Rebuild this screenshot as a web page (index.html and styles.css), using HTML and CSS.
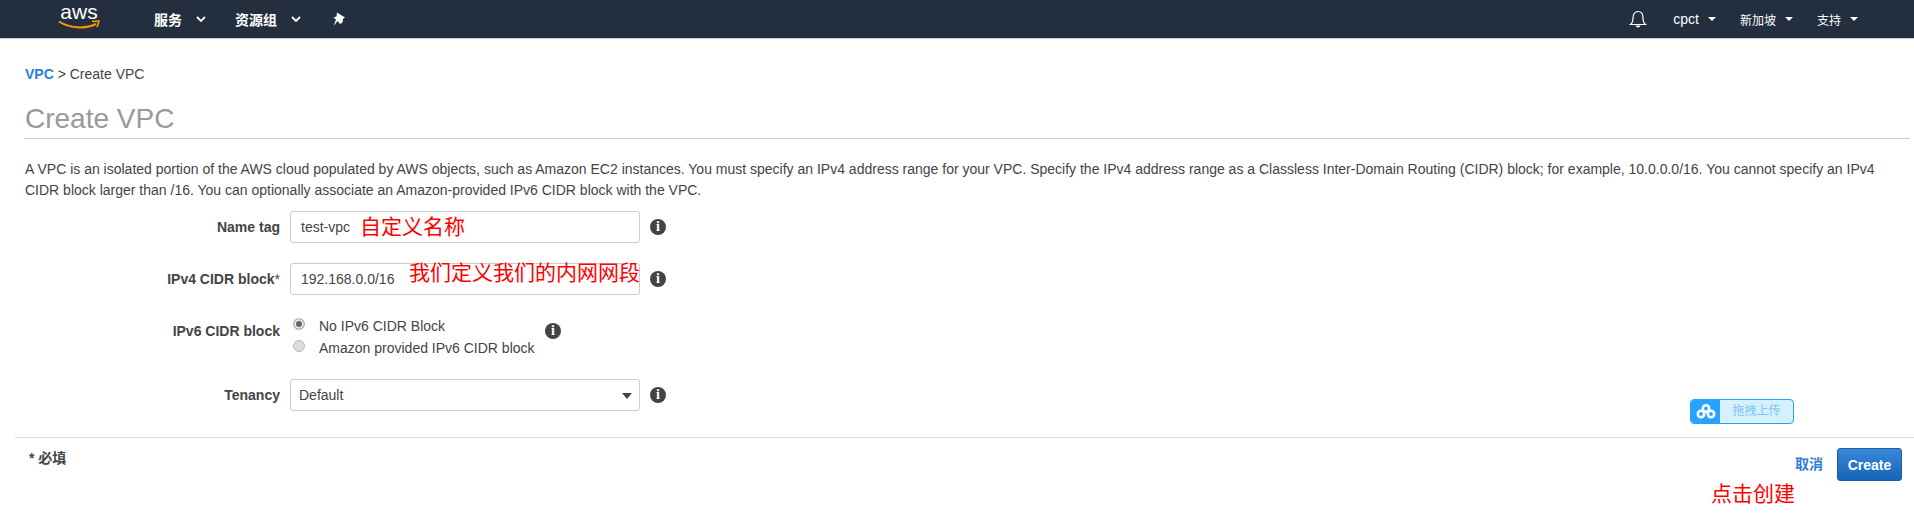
FILE: index.html
```html
<!DOCTYPE html>
<html lang="zh">
<head>
    <meta charset="UTF-8">
    <title>Create VPC</title>
    <link rel="stylesheet" href="styles.css">
</head>
<body>
    <nav class="topbar">
        <div class="logo">
            <span class="logo-text">aws</span>
            <svg class="logo-smile" width="42" height="10" viewBox="0 0 42 10"><path d="M1 1.500C11 8 27 9.500 38 4" fill="none" stroke="#f90" stroke-width="2"/><path d="M34 1.500L41 1L39 7" fill="none" stroke="#f90" stroke-width="1.600"/></svg>
        </div>
        <a class="menu menu-services">服务<svg class="chev" width="10" height="6" viewBox="0 0 10 6"><path d="M1 1l4 4 4-4" fill="none" stroke="#fff" stroke-width="1.800"/></svg></a>
        <a class="menu menu-groups">资源组<svg class="chev" width="10" height="6" viewBox="0 0 10 6"><path d="M1 1l4 4 4-4" fill="none" stroke="#fff" stroke-width="1.800"/></svg></a>
        <svg class="pin" width="14" height="15" viewBox="0 0 14 15"><path d="M5 0.500L13 5.500L11 6.800L10.500 10.500L8 12L5.500 9L1.500 14L4 7.500L1.500 5.500L4.500 4.500Z" fill="#fff"/></svg>
        <div class="topbar-right">
            <svg class="bell" width="18" height="19" viewBox="0 0 18 19"><path d="M1.500 14.500C3.500 13 4 11.500 4 8C4 4 6 1.500 9 1.500S14 4 14 8C14 11.500 14.500 13 16.500 14.500Z" fill="none" stroke="#fff" stroke-width="1.200"/><path d="M6.500 15.500C7 18 11 18 11.500 15.500Z" fill="#fff"/></svg>
            <a class="small-menu small-user">cpct<i class="caret"></i></a>
            <a class="small-menu small-region">新加坡<i class="caret"></i></a>
            <a class="small-menu small-support">支持<i class="caret"></i></a>
        </div>
    </nav>

    <main class="content">
        <div class="crumbs"><a class="crumb-link">VPC</a> &gt; Create VPC</div>
        <h1 class="title">Create VPC</h1>
        <p class="intro">A VPC is an isolated portion of the AWS cloud populated by AWS objects, such as Amazon EC2 instances. You must specify an IPv4 address range for your VPC. Specify the IPv4 address range as a Classless Inter-Domain Routing (CIDR) block; for example, 10.0.0.0/16. You cannot specify an IPv4 CIDR block larger than /16. You can optionally associate an Amazon-provided IPv6 CIDR block with the VPC.</p>

        <div class="row row-name">
            <label class="label">Name tag</label>
            <div class="field">test-vpc<span class="note note-name">自定义名称</span></div>
            <span class="info">i</span>
        </div>
        <div class="row row-cidr">
            <label class="label">IPv4 CIDR block<span class="star">*</span></label>
            <div class="field">192.168.0.0/16<span class="note note-cidr">我们定义我们的内网网段</span></div>
            <span class="info">i</span>
        </div>
        <div class="row row-ipv6">
            <label class="label">IPv6 CIDR block</label>
            <div class="radios">
                <div class="radio-line"><span class="radio radio-on"></span>No IPv6 CIDR Block</div>
                <div class="radio-line"><span class="radio"></span>Amazon provided IPv6 CIDR block</div>
            </div>
            <span class="info">i</span>
        </div>
        <div class="row row-tenancy">
            <label class="label">Tenancy</label>
            <div class="field field-select">Default<i class="select-arrow"></i></div>
            <span class="info">i</span>
        </div>
    </main>

    <div class="upload">
        <span class="upload-icon"><svg width="20" height="15" viewBox="0 0 20 15"><g fill="none" stroke="#fff" stroke-width="2.600"><circle cx="10" cy="4.500" r="3.200"/><circle cx="5" cy="10" r="3.200"/><circle cx="15" cy="10" r="3.200"/></g></svg></span>
        <span class="upload-text">拖拽上传</span>
    </div>

    <footer class="actions">
        <span class="required">* 必填</span>
        <a class="cancel">取消</a>
        <button class="create">Create</button>
        <span class="note note-create">点击创建</span>
    </footer>
</body>
</html>
```
FILE: styles.css
```css
body {
    margin: 0;
    height: 520px;
    overflow: hidden;
    position: relative;
    background-color: #fff;
    color: #444;
    font-family: "Liberation Sans", "Noto Sans CJK SC", sans-serif;
    font-size: 14px;
}

.topbar {
    display: flex;
    align-items: center;
    height: 38px;
    background-color: #232f3e;
    border-bottom: 1px solid #ccc;
    color: #fff;
}

.logo {
    position: relative;
    width: 42px;
    height: 38px;
    margin-left: 58px;
}

.logo-text {
    display: block;
    font-size: 21px;
    line-height: 21px;
    margin-top: 1px;
    text-align: center;
}

.logo-smile {
    position: absolute;
    left: 0;
    top: 20px;
}

.menu {
    display: flex;
    align-items: center;
    font-size: 14px;
    font-weight: bold;
}

.menu-services {
    margin-left: 54px;
}

.menu-groups {
    margin-left: 29px;
}

.chev {
    margin-left: 14px;
}

.pin {
    margin-left: 31px;
}

.topbar-right {
    display: flex;
    align-items: center;
    margin-left: auto;
    padding-right: 56px;
}

.bell {
    margin-right: 26px;
}

.small-menu {
    display: flex;
    align-items: center;
    font-size: 14px;
}

.small-user {
    margin-right: 24px;
}

.small-region {
    margin-right: 24px;
}

.small-region,
.small-support {
    font-size: 12px;
}

.caret {
    width: 0;
    height: 0;
    margin-left: 9px;
    border-left: 4px solid transparent;
    border-right: 4px solid transparent;
    border-top: 4px solid #fff;
}

.content {
    padding: 0 4px 0 25px;
}

.crumbs {
    margin-top: 26px;
    line-height: 18px;
}

.crumb-link {
    color: #2e7fd6;
    font-weight: bold;
}

.title {
    margin: 19px 0 0 -1px;
    padding: 0 0 2px 1px;
    border-bottom: 1px solid #ccc;
    color: #999;
    font-size: 28px;
    font-weight: normal;
    line-height: 34px;
}

.intro {
    margin: 20px 0 0;
    max-width: 1860px;
    line-height: 21px;
}

.row {
    display: flex;
    align-items: center;
    height: 32px;
}

.row-name {
    margin-top: 10px;
}

.row-cidr {
    margin-top: 20px;
}

.row-ipv6 {
    margin-top: 20px;
}

.row-tenancy {
    margin-top: 32px;
}

.label {
    width: 255px;
    margin-left: -25px;
    padding-left: 25px;
    text-align: right;
    font-weight: bold;
}

.star {
    font-weight: normal;
}

.field {
    position: relative;
    box-sizing: border-box;
    width: 350px;
    height: 32px;
    margin-left: 10px;
    padding-left: 10px;
    border: 1px solid #ccc;
    border-radius: 3px;
    line-height: 30px;
    white-space: nowrap;
}

.field-select {
    padding-left: 8px;
}

.select-arrow {
    position: absolute;
    right: 7px;
    top: 13px;
    border-left: 5px solid transparent;
    border-right: 5px solid transparent;
    border-top: 6px solid #444;
}

.info {
    display: block;
    width: 16px;
    height: 16px;
    margin-left: 10px;
    border-radius: 50%;
    background-color: #444;
    color: #fff;
    font-family: "Liberation Serif", serif;
    font-size: 14px;
    font-weight: bold;
    line-height: 16px;
    text-align: center;
}

.radios {
    align-self: flex-start;
    width: 245px;
    margin-left: 10px;
}

.radio-line {
    display: flex;
    align-items: center;
    height: 22px;
}

.radio {
    box-sizing: border-box;
    width: 12px;
    height: 12px;
    margin: -5px 14px 0 3px;
    border: 1px solid #bbb;
    border-radius: 50%;
    background-color: #ddd;
}

.radio-on {
    background-color: #666;
    box-shadow: inset 0 0 0 2px #e8e8e8;
}

.note {
    color: #f00;
    font-size: 21px;
    line-height: 24px;
    white-space: nowrap;
}

.note-name {
    position: absolute;
    left: 69px;
    top: 3px;
}

.note-cidr {
    position: absolute;
    left: 118px;
    top: -3px;
}

.note-create {
    position: absolute;
    left: 1696px;
    top: 44px;
}

.upload {
    position: absolute;
    left: 1690px;
    top: 399px;
    display: flex;
    box-sizing: border-box;
    width: 104px;
    height: 25px;
    border: 1px solid #25a3ff;
    border-radius: 4px;
    background-color: #d5f0ff;
    overflow: hidden;
}

.upload-icon {
    display: flex;
    align-items: center;
    justify-content: center;
    width: 29px;
    background-color: #25a3ff;
}

.upload-text {
    flex: 1;
    color: #7cc6f2;
    font-size: 12px;
    line-height: 23px;
    text-align: center;
}

.actions {
    position: absolute;
    left: 15px;
    right: 0;
    top: 437px;
    height: 80px;
    border-top: 1px solid #ddd;
}

.required {
    position: absolute;
    left: 14px;
    top: 9px;
    font-size: 14px;
    font-weight: bold;
}

.cancel {
    position: absolute;
    left: 1780px;
    top: 15px;
    color: #2e7fd6;
    font-size: 14px;
    font-weight: bold;
}

.create {
    position: absolute;
    left: 1822px;
    top: 10px;
    width: 65px;
    height: 33px;
    padding: 0;
    border: 1px solid #1b5fa8;
    border-radius: 3px;
    background: linear-gradient(#3a87d8, #1565b8);
    color: #fff;
    font-family: inherit;
    font-size: 14px;
    font-weight: bold;
}
```
